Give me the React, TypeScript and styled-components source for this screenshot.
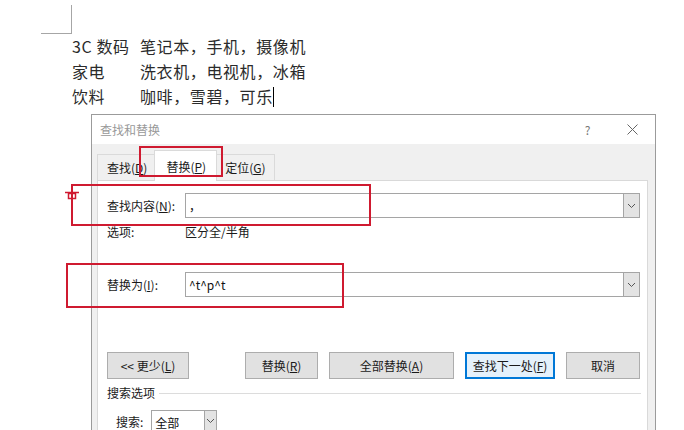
import styled, { createGlobalStyle } from 'styled-components';

const GlobalStyle = createGlobalStyle`
  html, body {
    margin: 0;
    padding: 0;
    background: #fff;
  }
  body {
    font-family: "Noto Sans CJK SC", "Noto Sans", sans-serif;
  }
  * {
    box-sizing: border-box;
  }
`;

const Page = styled.div`
  position: relative;
  width: 684px;
  height: 430px;
  overflow: hidden;
  background: #fff;
`;

const CornerMark = styled.div`
  margin: 5px 0 0 41px;
  width: 31px;
  height: 29px;
  border-right: 1px solid #a6a6a6;
  border-bottom: 1px solid #a6a6a6;
`;

const DocTable = styled.div`
  display: grid;
  grid-template-columns: 68px auto;
  margin-left: 72px;
  font-size: 16px;
  line-height: 25px;
  letter-spacing: 0.6px;
  color: #2b2b2b;
  width: max-content;
`;

const Caret = styled.span`
  display: inline-block;
  width: 1px;
  height: 20px;
  background: #000;
  vertical-align: -4px;
`;

const Dialog = styled.div`
  margin: 5px 0 0 91px;
  width: 565px;
  border: 1px solid #9b9b9b;
  background: #f0f0f0;
  font-size: 12px;
  color: #1a1a1a;
`;

const TitleBar = styled.div`
  display: flex;
  align-items: center;
  height: 29px;
  background: #fff;
  padding-left: 8px;
`;

const Title = styled.div`
  flex: 1;
  color: #999;
  font-size: 12px;
`;

const TitleButton = styled.div`
  width: 45px;
  height: 29px;
  display: flex;
  align-items: center;
  justify-content: center;
  color: #777;
  font-size: 12px;
`;

const Body = styled.div`
  padding: 6px 7px 0 5px;
`;

const TabStrip = styled.div`
  display: flex;
  align-items: flex-end;
  height: 30px;
`;

const Tab = styled.div<{ $active?: boolean }>`
  position: relative;
  display: flex;
  align-items: center;
  justify-content: center;
  height: ${p => (p.$active ? '31px' : '26px')};
  margin: ${p => (p.$active ? '0 -2px -1px' : '0')};
  padding: 0 ${p => (p.$active ? '10px' : '8px')} 0 ${p => (p.$active ? '11px' : '9px')};
  border: 1px solid #dadada;
  border-bottom: none;
  background: ${p => (p.$active ? '#fff' : '#f0f0f0')};
  z-index: ${p => (p.$active ? 1 : 0)};
`;

const Key = styled.span`
  text-decoration: underline;
  text-underline-offset: 1px;
`;

const Panel = styled.div`
  background: #fff;
  border: 1px solid #d9d9d9;
  padding: 12px 7px 40px 9px;
`;

const FieldRow = styled.div<{ $gap?: number }>`
  display: grid;
  grid-template-columns: 78px 1fr;
  align-items: center;
  height: 25px;
  margin-top: ${p => p.$gap ?? 0}px;
`;

const InfoRow = styled.div`
  display: grid;
  grid-template-columns: 78px 1fr;
  line-height: 16px;
  margin-top: 6px;
`;

const Combo = styled.div`
  display: flex;
  height: 25px;
  border: 1px solid #a5a5a5;
`;

const ComboText = styled.div`
  flex: 1;
  padding-left: 3px;
  line-height: 23px;
  font-size: 12px;
  color: #111;
`;

const DropButton = styled.div<{ $w?: number }>`
  width: ${p => p.$w ?? 17}px;
  margin: -1px -1px -1px 0;
  display: flex;
  align-items: center;
  justify-content: center;
  background: #e3e3e3;
  border: 1px solid #a5a5a5;
`;

const ButtonRow = styled.div`
  display: flex;
  gap: 11px;
  margin-top: 55px;
`;

const Spacer = styled.div`
  flex: 1;
`;

const Button = styled.div<{ $w: number; $default?: boolean }>`
  width: ${p => p.$w}px;
  height: 27px;
  display: flex;
  align-items: center;
  justify-content: center;
  background: ${p => (p.$default ? '#e5f1fb' : '#e1e1e1')};
  border: ${p => (p.$default ? '2px solid #0078d7' : '1px solid #adadad')};
  font-size: 12px;
`;

const SectionHeader = styled.div`
  display: flex;
  align-items: center;
  gap: 4px;
  line-height: 16px;
  margin-top: 6px;
  &::after {
    content: '';
    flex: 1;
    height: 1px;
    background: #dcdcdc;
    margin-right: -1px;
  }
`;

const SearchRow = styled.div`
  display: flex;
  align-items: center;
  gap: 8px;
  margin-top: 9px;
  padding-left: 9px;
`;

const Select = styled.div`
  display: flex;
  width: 66px;
  height: 22px;
  border: 1px solid #a5a5a5;
`;

const Annotation = styled.div<{ $x: number; $y: number; $w: number; $h: number }>`
  position: absolute;
  left: ${p => p.$x}px;
  top: ${p => p.$y}px;
  width: ${p => p.$w}px;
  height: ${p => p.$h}px;
  border: 2px solid #cf1a30;
  pointer-events: none;
  z-index: 5;
`;

const AnchorMark = styled.svg`
  position: absolute;
  left: 64px;
  top: 191px;
  z-index: 5;
`;

const Chevron = () => (
  <svg width="9" height="6" viewBox="0 0 9 6">
    <path d="M1 1 L4.5 4.5 L8 1" fill="none" stroke="#555" strokeWidth="1" />
  </svg>
);

const App = () => {
  return (
    <Page>
      <GlobalStyle />
      <CornerMark />
      <DocTable>
        <span>3C 数码</span>
        <span>笔记本，手机，摄像机</span>
        <span>家电</span>
        <span>洗衣机，电视机，冰箱</span>
        <span>饮料</span>
        <span>
          咖啡，雪碧，可乐
          <Caret />
        </span>
      </DocTable>

      <Dialog>
        <TitleBar>
          <Title>查找和替换</Title>
          <TitleButton>?</TitleButton>
          <TitleButton>
            <svg width="11" height="11" viewBox="0 0 11 11">
              <path d="M0.5 0.5 L10.5 10.5 M10.5 0.5 L0.5 10.5" stroke="#666" strokeWidth="1" />
            </svg>
          </TitleButton>
        </TitleBar>
        <Body>
          <TabStrip>
            <Tab>
              查找(<Key>D</Key>)
            </Tab>
            <Tab $active>
              替换(<Key>P</Key>)
            </Tab>
            <Tab>
              定位(<Key>G</Key>)
            </Tab>
          </TabStrip>
          <Panel>
            <FieldRow>
              <span>
                查找内容(<Key>N</Key>):
              </span>
              <Combo>
                <ComboText>，</ComboText>
                <DropButton>
                  <Chevron />
                </DropButton>
              </Combo>
            </FieldRow>
            <InfoRow>
              <span>选项:</span>
              <span>区分全/半角</span>
            </InfoRow>
            <FieldRow $gap={32}>
              <span>
                替换为(<Key>I</Key>):
              </span>
              <Combo>
                <ComboText>^t^p^t</ComboText>
                <DropButton>
                  <Chevron />
                </DropButton>
              </Combo>
            </FieldRow>
            <ButtonRow>
              <Button $w={82}>
                &lt;&lt; 更少(<Key>L</Key>)
              </Button>
              <Spacer />
              <Button $w={73}>
                替换(<Key>R</Key>)
              </Button>
              <Button $w={125}>
                全部替换(<Key>A</Key>)
              </Button>
              <Button $w={90} $default>
                查找下一处(<Key>F</Key>)
              </Button>
              <Button $w={74}>取消</Button>
            </ButtonRow>
            <SectionHeader>搜索选项</SectionHeader>
            <SearchRow>
              <span>搜索:</span>
              <Select>
                <ComboText>全部</ComboText>
                <DropButton $w={13}>
                  <Chevron />
                </DropButton>
              </Select>
            </SearchRow>
          </Panel>
        </Body>
      </Dialog>

      <Annotation $x={139} $y={146} $w={84} $h={31} />
      <Annotation $x={71} $y={184} $w={300} $h={42} />
      <Annotation $x={66} $y={263} $w={278} $h={45} />
      <AnchorMark width="16" height="9" viewBox="0 0 16 9">
        <path d="M1 1.5 H15" stroke="#cf1a30" strokeWidth="1.5" />
        <rect x="4.5" y="2.5" width="7" height="5" fill="none" stroke="#cf1a30" strokeWidth="1.5" />
      </AnchorMark>
    </Page>
  );
};

export default App;
